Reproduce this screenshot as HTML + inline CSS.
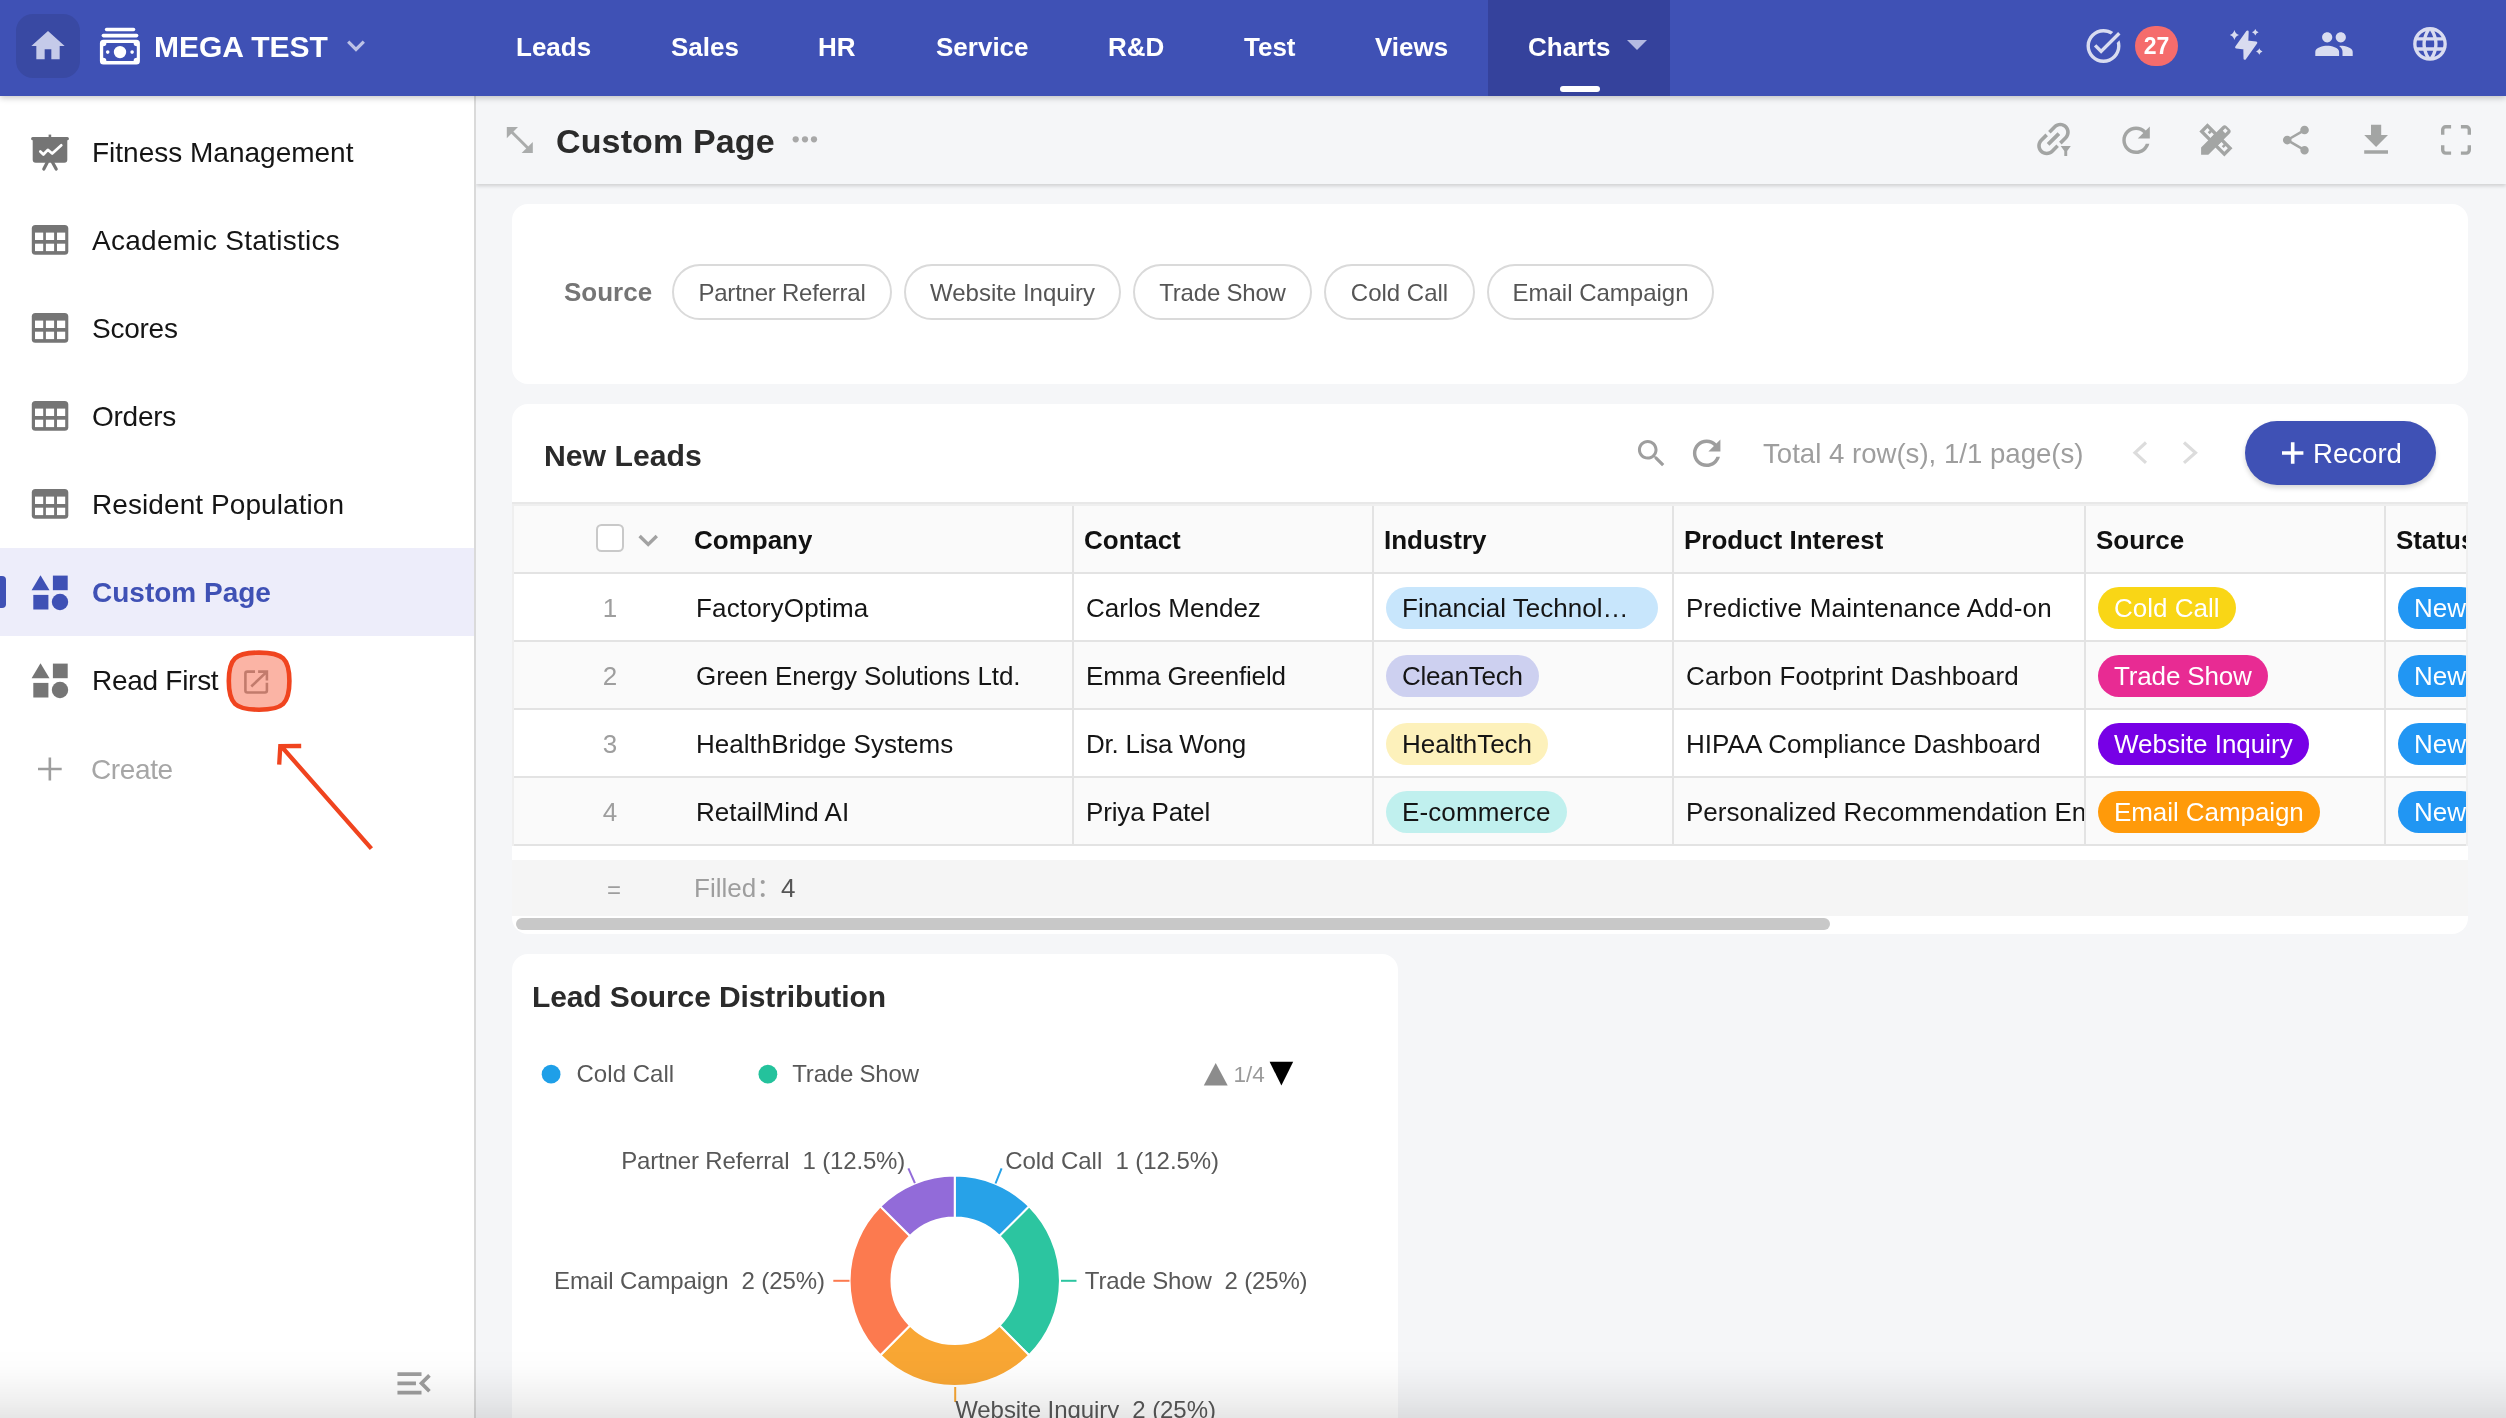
<!DOCTYPE html>
<html lang="en">
<head>
<meta charset="utf-8">
<title>Custom Page</title>
<style>
*{box-sizing:border-box;margin:0;padding:0}
html,body{width:2506px;height:1418px;overflow:hidden;background:#f5f6f8}
body{font-family:"Liberation Sans","Noto Sans CJK SC",sans-serif;color:#151515;position:relative;-webkit-font-smoothing:antialiased}
.abs{position:absolute}
body>*{will-change:transform}
svg{display:block;position:absolute;overflow:visible}
/* ---------- top nav ---------- */
#nav{position:absolute;left:0;top:0;width:2506px;height:96px;background:#3f51b5;box-shadow:0 2px 6px rgba(0,0,0,.22);z-index:5}
#home{position:absolute;left:16px;top:14px;width:64px;height:64px;border-radius:17px;background:#3949a3}
#brand{position:absolute;left:154px;top:0;height:96px;line-height:94px;font-size:30px;font-weight:700;color:#fff;letter-spacing:0px;white-space:nowrap}
.tab{position:absolute;top:0;height:96px;line-height:94px;font-size:26px;font-weight:700;color:#fff;white-space:nowrap}
#tabactive{position:absolute;left:1488px;top:0;width:182px;height:96px;background:#35429c}
#tabline{position:absolute;left:1560px;top:86px;width:40px;height:6px;border-radius:3px;background:#fff}
#badge{position:absolute;left:2135px;top:26px;width:43px;height:40px;border-radius:20px;background:#f56c6c;color:#fff;font-size:23px;font-weight:700;text-align:center;line-height:41px}
/* ---------- sidebar ---------- */
#side{position:absolute;left:0;top:96px;width:476px;height:1322px;background:#fff;border-right:2px solid #dadada}
.si{position:absolute;left:0;width:474px;height:88px;line-height:90px;font-size:28px;color:#151515;padding-left:92px;white-space:nowrap}
.si.on{background:#ededfa;color:#3f51b5;font-weight:700}
.si.on:before{content:"";position:absolute;left:0;top:28px;width:6px;height:32px;border-radius:0 4px 4px 0;background:#3f51b5}
/* ---------- content ---------- */
#titlebar{position:absolute;left:476px;top:96px;width:2030px;height:88px;background:#f5f6f8;box-shadow:0 2px 4px rgba(0,0,0,.16);z-index:2;clip-path:inset(0 0 -12px 0)}
#ptitle{position:absolute;left:556px;top:96px;height:88px;line-height:90px;font-size:34px;font-weight:700;color:#2b2b2b;z-index:3;white-space:nowrap;letter-spacing:.14px}
.card{position:absolute;background:#fff;border-radius:16px}
#fade{position:absolute;left:0;top:1348px;width:2506px;height:70px;background:linear-gradient(to bottom,rgba(0,0,0,0) 0%,rgba(0,0,0,.008) 25%,rgba(0,0,0,.03) 50%,rgba(0,0,0,.06) 75%,rgba(0,0,0,.098) 100%);z-index:20;pointer-events:none}

/* ---------- filter card ---------- */
#flabel{position:absolute;left:564px;top:264px;height:56px;line-height:56px;font-size:26px;font-weight:700;color:#757575;white-space:nowrap}
.chip{position:absolute;top:264px;height:56px;line-height:54px;border:2px solid #dadada;border-radius:28px;font-size:24px;color:#555;text-align:center;white-space:nowrap;background:#fff}
/* ---------- table card ---------- */
#tl{position:absolute;left:544px;top:424px;height:64px;line-height:64px;font-size:30.2px;font-weight:700;color:#2b2b2b;white-space:nowrap}
#total{position:absolute;left:1763px;top:421px;height:64px;line-height:65px;font-size:27.6px;color:#9e9e9e;white-space:nowrap}
#rec{position:absolute;left:2245px;top:421px;width:191px;height:64px;border-radius:32px;background:#3f51b5;box-shadow:0 3px 5px rgba(0,0,0,.16)}
#rec span{position:absolute;left:68px;top:0;line-height:65px;font-size:27.6px;color:#fff}
#thshadow{position:absolute;left:512px;top:502px;width:1956px;height:4px;background:linear-gradient(to bottom,#e8e8e8 0,#e8e8e8 50%,#efefef 50%,#efefef 100%)}
#tbord{position:absolute;left:512px;top:506px;width:1956px;height:340px;background:#efefef}
#tbl{position:absolute;left:514px;top:506px;width:1952px;height:340px;overflow:hidden;background:#fff}
.tr{position:absolute;left:0;width:1952px;height:68px;border-bottom:2px solid #e3e3e3;background:#fff}
.tr.alt,.tr.hd{background:#fafafa}
.tr.hd{height:68px}
.td{position:absolute;top:0;height:66px;line-height:69px;font-size:26px;white-space:nowrap;overflow:hidden;color:#151515}
.hd .td{font-weight:700;color:#111;line-height:69px}
.vl{position:absolute;top:0;width:2px;height:340px;background:#e3e3e3}
.no{color:#9e9e9e;width:60px;text-align:center;left:66px}
.tag{position:absolute;top:13px;height:42px;line-height:43px;border-radius:21px;font-size:26px;padding:0 16px;white-space:nowrap;overflow:hidden}
.tw{color:#fff}
#foot{position:absolute;left:512px;top:860px;width:1956px;height:56px;background:#f5f5f5;line-height:57px;font-size:26px;color:#9e9e9e}
#sbar{position:absolute;left:516px;top:918px;width:1314px;height:12px;border-radius:6px;background:#c8c8c8}
</style>
</head>
<body>
<!-- NAV -->
<div id="nav">
  <div id="home"></div>
  <div id="brand">MEGA TEST</div>
  <div id="tabactive"></div><div id="tabline"></div>
  <div class="tab" style="left:516px">Leads</div>
  <div class="tab" style="left:671px">Sales</div>
  <div class="tab" style="left:818px">HR</div>
  <div class="tab" style="left:936px">Service</div>
  <div class="tab" style="left:1108px">R&amp;D</div>
  <div class="tab" style="left:1244px">Test</div>
  <div class="tab" style="left:1375px">Views</div>
  <div class="tab" style="left:1528px">Charts</div>
  <div id="badge">27</div>
</div>
<!-- SIDEBAR -->
<div id="side">
  <div class="si" style="top:12px">Fitness Management</div>
  <div class="si" style="top:100px;letter-spacing:.28px">Academic Statistics</div>
  <div class="si" style="top:188px;letter-spacing:-.25px">Scores</div>
  <div class="si" style="top:276px;letter-spacing:-.25px">Orders</div>
  <div class="si" style="top:364px;letter-spacing:.08px">Resident Population</div>
  <div class="si on" style="top:452px">Custom Page</div>
  <div class="si" style="top:540px;letter-spacing:-0.28px">Read First</div>
  <div class="si" style="top:629px;color:#a6a6a6;padding-left:91px;letter-spacing:-.38px">Create</div>
</div>
<!-- TITLE BAR -->
<div id="titlebar"></div>
<div id="ptitle">Custom Page</div>
<!-- CARDS -->
<div class="card" id="c1" style="left:512px;top:204px;width:1956px;height:180px"></div>
<div class="card" id="c2" style="left:512px;top:404px;width:1956px;height:530px"></div>
<div class="card" id="c3" style="left:512px;top:954px;width:886px;height:464px;border-radius:16px 16px 0 0"></div>

<!-- FILTER CARD CONTENT -->
<div id="flabel">Source</div>
<div class="chip" style="left:672px;width:220px;letter-spacing:-0.23px">Partner Referral</div>
<div class="chip" style="left:904px;width:217px">Website Inquiry</div>
<div class="chip" style="left:1133px;width:179px;letter-spacing:-0.2px">Trade Show</div>
<div class="chip" style="left:1324px;width:151px">Cold Call</div>
<div class="chip" style="left:1487px;width:227px">Email Campaign</div>
<!-- TABLE CARD CONTENT -->
<div id="tl">New Leads</div>
<div id="total">Total 4 row(s), 1/1 page(s)</div>
<div id="rec"><span>Record</span></div>
<div id="thshadow"></div><div id="tbord"></div>
<div id="tbl">
  <div class="tr hd" style="top:0">
    <div class="td" style="left:180px">Company</div>
    <div class="td" style="left:570px">Contact</div>
    <div class="td" style="left:870px">Industry</div>
    <div class="td" style="left:1170px">Product Interest</div>
    <div class="td" style="left:1582px">Source</div>
    <div class="td" style="left:1882px">Status</div>
  </div>
  <div class="tr" style="top:68px">
    <div class="td no">1</div>
    <div class="td" style="letter-spacing:0.154px;left:182px">FactoryOptima</div>
    <div class="td" style="left:572px">Carlos Mendez</div>
    <div class="tag" style="left:872px;width:272px;background:#c8e6fc">Financial Technol…</div>
    <div class="td" style="letter-spacing:0.207px;left:1172px;width:398px">Predictive Maintenance Add-on</div>
    <div class="tag tw" style="left:1584px;background:#f9d616">Cold Call</div>
    <div class="tag tw" style="left:1884px;background:#2196f3">New</div>
  </div>
  <div class="tr alt" style="top:136px">
    <div class="td no">2</div>
    <div class="td" style="letter-spacing:-0.081px;left:182px">Green Energy Solutions Ltd.</div>
    <div class="td" style="letter-spacing:-0.167px;left:572px">Emma Greenfield</div>
    <div class="tag" style="letter-spacing:-0.222px;left:872px;background:#cdd0f0">CleanTech</div>
    <div class="td" style="letter-spacing:0.131px;left:1172px;width:398px">Carbon Footprint Dashboard</div>
    <div class="tag tw" style="letter-spacing:-0.150px;left:1584px;background:#e82b93">Trade Show</div>
    <div class="tag tw" style="left:1884px;background:#2196f3">New</div>
  </div>
  <div class="tr" style="top:204px">
    <div class="td no">3</div>
    <div class="td" style="left:182px">HealthBridge Systems</div>
    <div class="td" style="letter-spacing:-0.223px;left:572px">Dr. Lisa Wong</div>
    <div class="tag" style="left:872px;background:#fdf1bb">HealthTech</div>
    <div class="td" style="letter-spacing:0.046px;left:1172px;width:398px">HIPAA Compliance Dashboard</div>
    <div class="tag tw" style="left:1584px;background:#7700e6">Website Inquiry</div>
    <div class="tag tw" style="left:1884px;background:#2196f3">New</div>
  </div>
  <div class="tr alt" style="top:272px">
    <div class="td no">4</div>
    <div class="td" style="left:182px">RetailMind AI</div>
    <div class="td" style="letter-spacing:-0.155px;left:572px">Priya Patel</div>
    <div class="tag" style="letter-spacing:0.120px;left:872px;background:#c0f0ee">E-commerce</div>
    <div class="td" style="left:1172px;width:398px">Personalized Recommendation Engine</div>
    <div class="tag tw" style="letter-spacing:-0.071px;left:1584px;background:#ff9a0a">Email Campaign</div>
    <div class="tag tw" style="left:1884px;background:#2196f3">New</div>
  </div>
  <div class="vl" style="left:558px"></div>
  <div class="vl" style="left:858px"></div>
  <div class="vl" style="left:1158px"></div>
  <div class="vl" style="left:1570px"></div>
  <div class="vl" style="left:1870px"></div>
</div>
<div id="foot"><span class="abs" style="left:95px;top:1px;font-size:24px">=</span><span class="abs" style="left:182px">Filled：</span><span class="abs" style="left:269px;color:#555">4</span></div>
<div id="sbar"></div>
<svg id="ico" width="2506" height="1418" viewBox="0 0 2506 1418" style="left:0;top:0;z-index:10;pointer-events:none">
<path transform="translate(28,26) scale(1.6667)" fill="#c5cae9"  d="M10 20v-6h4v6h5v-8h3L12 3 2 12h3v8z"/>
<g fill="#fff"><rect x="104.8" y="27.7" width="30.5" height="3.6" rx="1.8"/><rect x="101.6" y="33.8" width="36.8" height="3.6" rx="1.8"/><path fill-rule="evenodd" d="M103.4 39.8h33a3.5 3.500 0 0 1 3.500 3.500v17.600a3.500 3.500 0 0 1 -3.500 3.500h-33a3.500 3.500 0 0 1 -3.500 -3.500v-17.600a3.500 3.500 0 0 1 3.500 -3.500z M106.4 43.1a3.200 3.200 0 0 1 -3.200 3.200v11.500a3.200 3.200 0 0 1 3.200 3.200h27.200a3.200 3.200 0 0 1 3.200 -3.200v-11.500a3.200 3.200 0 0 1 -3.200 -3.200z"/><circle cx="120" cy="52.1" r="6.200"/><circle cx="107.7" cy="52.1" r="1.800"/><circle cx="132.1" cy="52.1" r="1.800"/></g>
<path d="M348.2 41.6L356 49.400L363.8 41.600" fill="none" stroke="#bcc2e6" stroke-width="3.200"/>
<path d="M1627 40h20l-10 10z" fill="#b4bae2"/>
<path transform="translate(2083.1,25.6) scale(1.7000)" fill="#d9dcf0"  d="M22 5.18 10.59 16.6l-4.24-4.24 1.41-1.41 2.83 2.83 10-10L22 5.18zm-2.21 5.04c.13.57.21 1.17.21 1.78 0 4.42-3.58 8-8 8s-8-3.58-8-8 3.58-8 8-8c1.58 0 3.04.46 4.28 1.25l1.44-1.44C16.1 2.67 14.13 2 12 2 6.48 2 2 6.48 2 12s4.48 10 10 10 10-4.48 10-10c0-1.19-.22-2.33-.6-3.39l-1.61 1.61z"/>
<path fill="#d9dcf0" stroke="#d9dcf0" stroke-width="2.600" stroke-linejoin="round" d="M2247.4 31.8L2236.4 47.200L2244.600 48.200L2244.800 58.500L2256 42.800L2247 41.700z"/>
<path fill="#d9dcf0" d="M2234.4 29.9Q2235.4120000000003 33.878 2239.0 35Q2235.4120000000003 36.122 2234.4 40.1Q2233.388 36.122 2229.8 35Q2233.388 33.878 2234.4 29.9zM2255.3 29.099999999999998Q2256.0260000000003 31.595999999999997 2258.6000000000004 32.3Q2256.0260000000003 33.004 2255.3 35.5Q2254.574 33.004 2252.0 32.3Q2254.574 31.595999999999997 2255.3 29.099999999999998zM2259.3 48.2Q2260.0040000000004 50.774 2262.5 51.5Q2260.0040000000004 52.226 2259.3 54.8Q2258.596 52.226 2256.1000000000004 51.5Q2258.596 50.774 2259.3 48.2z"/>
<path transform="translate(2313.6,23.7) scale(1.7000)" fill="#d9dcf0"  d="M16 11c1.66 0 2.99-1.34 2.99-3S17.66 5 16 5c-1.66 0-3 1.34-3 3s1.34 3 3 3zm-8 0c1.66 0 2.99-1.34 2.99-3S9.66 5 8 5C6.34 5 5 6.34 5 8s1.34 3 3 3zm0 2c-2.33 0-7 1.17-7 3.5V19h14v-2.500c0-2.330-4.670-3.500-7-3.500zm8 0c-.29 0-.62.02-.97.05 1.16.84 1.97 1.97 1.97 3.45V19h6v-2.500c0-2.330-4.670-3.500-7-3.500z"/>
<path transform="translate(2409.8,23.7) scale(1.6833)" fill="#d9dcf0"  d="M11.99 2C6.47 2 2 6.48 2 12s4.47 10 9.990 10C17.52 22 22 17.52 22 12S17.52 2 11.99 2zm6.93 6h-2.950c-.32-1.250-.78-2.450-1.380-3.560 1.840.630 3.370 1.910 4.330 3.560zM12 4.040c.83 1.200 1.480 2.530 1.910 3.960h-3.820c.43-1.430 1.080-2.760 1.910-3.960zM4.260 14C4.100 13.360 4 12.690 4 12s.1-1.360.26-2h3.380c-.08.66-.14 1.320-.14 2 0 .68.06 1.340.14 2H4.260zm.82 2h2.950c.32 1.250.78 2.450 1.380 3.560-1.840-.630-3.370-1.900-4.330-3.560zm2.950-8H5.080c.96-1.660 2.490-2.930 4.330-3.560C8.810 5.550 8.350 6.750 8.030 8zM12 19.960c-.83-1.200-1.480-2.530-1.910-3.960h3.820c-.43 1.430-1.080 2.760-1.910 3.960zM14.340 14H9.660c-.09-.66-.16-1.320-.16-2 0-.68.07-1.350.16-2h4.680c.09.65.16 1.320.16 2 0 .68-.07 1.340-.16 2zm.25 5.560c.6-1.110 1.060-2.310 1.380-3.560h2.950c-.96 1.650-2.490 2.930-4.330 3.560zM16.360 14c.08-.66.14-1.320.14-2 0-.68-.06-1.340-.14-2h3.380c.16.64.26 1.310.26 2s-.1 1.360-.26 2h-3.380z"/>
<g fill="#aaacac"><path d="M506.8 127.1h11.200l-11.200 11.200z"/><path d="M532.8 153h-11.200l11.200 -11.100z"/></g><path d="M511 131.300L528.600 148.800" stroke="#aaacac" stroke-width="3" fill="none"/>
<g fill="#a8a8a8"><circle cx="795.7" cy="139.300" r="3.100"/><circle cx="805" cy="139.300" r="3.100"/><circle cx="814" cy="139.300" r="3.100"/></g>
<path transform="translate(2053.5,139) rotate(-45) scale(1.91) translate(-12,-12)" fill="#a3a5a4" d="M3.9 12c0-1.710 1.390-3.100 3.100-3.100h4V7H7c-2.760 0-5 2.240-5 5s2.240 5 5 5h4v-1.900H7c-1.710 0-3.100-1.390-3.100-3.100zM8 13h8v-2H8v2zm9-6h-4v1.900h4c1.710 0 3.100 1.390 3.100 3.100s-1.390 3.100-3.100 3.100h-4V17h4c2.760 0 5-2.240 5-5s-2.240-5-5-5z"/>
<path fill="#a3a5a4" d="M2060.7 145.900h10.100l-3.600 5v5.100h-2.900v-5.100z"/>
<path transform="translate(2115.4,119.6) scale(1.7208)" fill="#a3a5a4"  d="M17.65 6.35C16.2 4.9 14.21 4 12 4c-4.420 0-7.990 3.580-7.990 8s3.570 8 7.990 8c3.730 0 6.840-2.550 7.730-6h-2.080c-.82 2.330-3.040 4-5.650 4-3.310 0-6-2.690-6-6s2.690-6 6-6c1.660 0 3.140.69 4.220 1.780L13 11h7V4l-2.350 2.350z"/>
<g fill="#a3a5a4" fill-rule="evenodd"><path transform="translate(2207.45,123.28) rotate(45)" d="M0 0H35.400V11.470H0z M3.400 3.400V8.200H12.500V3.400H9.300V6.200H6.600V3.400z M23 3.300V8.200H32.100V3.300H29V6.100H26.300V3.300z"/><path transform="translate(2201.1,154.83) rotate(-45)" d="M0 0L5.110 -5.110H35.300a3 3 0 0 1 3 3V2.110a3 3 0 0 1 -3 3H5.110z M32.400 -1.750h3.500v3.500h-3.500z"/></g>
<path transform="translate(2278.6,122.8) scale(1.4417)" fill="#a3a5a4"  d="M18 16.080c-.76 0-1.440.3-1.960.77L8.910 12.700c.05-.23.09-.46.09-.7s-.04-.47-.09-.7l7.050-4.110c.54.5 1.250.81 2.040.81 1.660 0 3-1.340 3-3s-1.340-3-3-3-3 1.340-3 3c0 .24.04.47.09.7L8.040 9.810C7.500 9.310 6.790 9 6 9c-1.660 0-3 1.340-3 3s1.340 3 3 3c.79 0 1.500-.31 2.040-.81l7.120 4.160c-.05.21-.08.43-.08.65 0 1.610 1.310 2.920 2.920 2.920 1.610 0 2.920-1.310 2.920-2.920s-1.310-2.920-2.920-2.920z"/>
<path transform="translate(2355.7,119.7) scale(1.7000)" fill="#a3a5a4"  d="M19 9h-4V3H9v6H5l7 7 7-7zM5 18v2h14v-2H5z"/>
<g fill="none" stroke="#a3a5a4" stroke-width="3.400"><path d="M2442.700 134.700V129.700a3 3 0 0 1 3 -3H2451.100"/><path d="M2460.900 126.700H2466.300a3 3 0 0 1 3 3V134.700"/><path d="M2442.700 145.200V150.100a3 3 0 0 0 3 3H2451.100"/><path d="M2460.900 153.100H2466.300a3 3 0 0 0 3 -3V145.200"/></g>
<g fill="#757575"><rect x="31.1" y="136.900" width="37.800" height="3.300" rx="1.500"/><rect x="48.6" y="134.600" width="2.600" height="3.500"/><path d="M32.7 139.500h34.600v20.300a3 3 0 0 1 -3 3h-28.600a3 3 0 0 1 -3 -3z"/></g><path d="M47.200 162.500L43.800 169M52.600 162.500L56.200 169" stroke="#757575" stroke-width="3.200" stroke-linecap="round" fill="none"/><path d="M40.300 151.500L43.400 154.500L47.800 149.800L52.200 153.500L61.300 145.300" stroke="#fff" stroke-width="2.700" fill="none" stroke-linecap="round" stroke-linejoin="round"/>
<rect x="31.8" y="225" width="36.500" height="29.800" rx="3.600" fill="#757575"/><rect x="35" y="232.6" width="8.200" height="7.400" fill="#fff"/><rect x="35" y="243.7" width="8.200" height="7.400" fill="#fff"/><rect x="45.9" y="232.6" width="8.200" height="7.400" fill="#fff"/><rect x="45.9" y="243.7" width="8.200" height="7.400" fill="#fff"/><rect x="57" y="232.6" width="8.200" height="7.400" fill="#fff"/><rect x="57" y="243.7" width="8.200" height="7.400" fill="#fff"/>
<rect x="31.8" y="313" width="36.500" height="29.800" rx="3.600" fill="#757575"/><rect x="35" y="320.6" width="8.200" height="7.400" fill="#fff"/><rect x="35" y="331.7" width="8.200" height="7.400" fill="#fff"/><rect x="45.9" y="320.6" width="8.200" height="7.400" fill="#fff"/><rect x="45.9" y="331.7" width="8.200" height="7.400" fill="#fff"/><rect x="57" y="320.6" width="8.200" height="7.400" fill="#fff"/><rect x="57" y="331.7" width="8.200" height="7.400" fill="#fff"/>
<rect x="31.8" y="401" width="36.500" height="29.800" rx="3.600" fill="#757575"/><rect x="35" y="408.6" width="8.200" height="7.400" fill="#fff"/><rect x="35" y="419.7" width="8.200" height="7.400" fill="#fff"/><rect x="45.9" y="408.6" width="8.200" height="7.400" fill="#fff"/><rect x="45.9" y="419.7" width="8.200" height="7.400" fill="#fff"/><rect x="57" y="408.6" width="8.200" height="7.400" fill="#fff"/><rect x="57" y="419.7" width="8.200" height="7.400" fill="#fff"/>
<rect x="31.8" y="489" width="36.500" height="29.800" rx="3.600" fill="#757575"/><rect x="35" y="496.6" width="8.200" height="7.400" fill="#fff"/><rect x="35" y="507.7" width="8.200" height="7.400" fill="#fff"/><rect x="45.9" y="496.6" width="8.200" height="7.400" fill="#fff"/><rect x="45.9" y="507.7" width="8.200" height="7.400" fill="#fff"/><rect x="57" y="496.6" width="8.200" height="7.400" fill="#fff"/><rect x="57" y="507.7" width="8.200" height="7.400" fill="#fff"/>
<g fill="#3f51b5"><path d="M40.5 575.3L49.500 590.2H31.600z"/><rect x="52.9" y="575.6" width="14.800" height="14.600"/><rect x="33.3" y="594.9" width="15.100" height="14.600"/><circle cx="60" cy="602" r="8.200"/></g>
<g fill="#757575"><path d="M40.5 663.3L49.500 678.2H31.600z"/><rect x="52.9" y="663.6" width="14.800" height="14.600"/><rect x="33.3" y="682.9" width="15.100" height="14.600"/><circle cx="60" cy="690" r="8.200"/></g>
<g fill="none" stroke="#a0a0a0" stroke-width="2.600"><path d="M255 671.600H247.400a2 2 0 0 0 -2 2V690.500a2 2 0 0 0 2 2H264.900a2 2 0 0 0 2 -2V682.700"/><path d="M258.100 671.600H266.900V680.600M266.900 671.600L251.300 686.500"/></g>
<path d="M259.100 652.600C283 652.600 289.400 658.600 289.400 681.100C289.400 703.700 283 709.700 259.100 709.700C235.200 709.700 228.800 703.700 228.800 681.100C228.800 658.600 235.200 652.600 259.100 652.600z" fill="rgba(244,67,30,.4)" stroke="#f0441f" stroke-width="4.600"/>
<path d="M371.400 848.700L280.600 745.500M301.200 746L280.300 746.200L279.200 764.600" fill="none" stroke="#f0441f" stroke-width="4.300"/>
<path d="M38 769H61.700M49.850 757.500V780.500" stroke="#9e9e9e" stroke-width="2.600" fill="none"/>
<path transform="translate(391.9,1361.1) scale(1.8500)" fill="#9e9e9e"  d="M3 18h13v-2H3v2zm0-5h10v-2H3v2zm0-7v2h13V6H3zm18 9.590L17.420 12 21 8.410 19.590 7l-5 5 5 5L21 15.590z"/>
<path transform="translate(1633.4,435.4) scale(1.5083)" fill="#9e9e9e"  d="M15.5 14h-.79l-.28-.27C15.41 12.590 16 11.110 16 9.500 16 5.910 13.090 3 9.500 3S3 5.910 3 9.500 5.910 16 9.500 16c1.610 0 3.090-.59 4.230-1.570l.27.28v.79l5 4.990L20.490 19l-4.990-5zm-6 0C7.010 14 5 11.990 5 9.500S7.010 5 9.500 5 14 7.010 14 9.500 11.990 14 9.500 14z"/>
<path transform="translate(1686,432.6) scale(1.7208)" fill="#9e9e9e"  d="M17.65 6.35C16.2 4.9 14.21 4 12 4c-4.420 0-7.990 3.580-7.990 8s3.570 8 7.990 8c3.730 0 6.840-2.550 7.730-6h-2.080c-.82 2.330-3.040 4-5.650 4-3.310 0-6-2.690-6-6s2.690-6 6-6c1.660 0 3.140.69 4.220 1.780L13 11h7V4l-2.350 2.350z"/>
<path d="M2146 442.500L2135 452.700L2146 462.900" stroke="#dcdcdc" stroke-width="3.200" fill="none"/><path d="M2184 442.500L2195.500 452.700L2184 462.900" stroke="#dcdcdc" stroke-width="3.200" fill="none"/>
<path d="M2282 453H2303.400M2292.700 442.300V463.700" stroke="#fff" stroke-width="3.600" fill="none"/>
<rect x="597" y="525" width="26" height="26" rx="4.500" fill="#fff" stroke="#c9c9c9" stroke-width="2"/>
<path d="M639.600 536L648.200 544.400L656.800 536" stroke="#a2a2a2" stroke-width="3.400" fill="none"/>
</svg>
<svg id="chart" width="886" height="464" viewBox="512 954 886 464" style="left:512px;top:954px;z-index:9;overflow:hidden" font-family="Liberation Sans, sans-serif">
<text x="532" y="1007" font-size="30" font-weight="700" fill="#2b2b2b" textLength="354" lengthAdjust="spacing">Lead Source Distribution</text>
<path d="M954.75 1175.60A105.2 105.2 0 0 1 1029.14 1206.41L999.51 1236.04A63.3 63.3 0 0 0 954.75 1217.50z" fill="#27a2e8" stroke="#fff" stroke-width="2" stroke-linejoin="round"/>
<path d="M1029.14 1206.41A105.2 105.2 0 0 1 1029.14 1355.19L999.51 1325.56A63.3 63.3 0 0 0 999.51 1236.04z" fill="#2cc5a0" stroke="#fff" stroke-width="2" stroke-linejoin="round"/>
<path d="M1029.14 1355.19A105.2 105.2 0 0 1 880.36 1355.19L909.99 1325.56A63.3 63.3 0 0 0 999.51 1325.56z" fill="#f9a734" stroke="#fff" stroke-width="2" stroke-linejoin="round"/>
<path d="M880.36 1355.19A105.2 105.2 0 0 1 880.36 1206.41L909.99 1236.04A63.3 63.3 0 0 0 909.99 1325.56z" fill="#fc7a4f" stroke="#fff" stroke-width="2" stroke-linejoin="round"/>
<path d="M880.36 1206.41A105.2 105.2 0 0 1 954.75 1175.60L954.75 1217.50A63.3 63.3 0 0 0 909.99 1236.04z" fill="#926bd9" stroke="#fff" stroke-width="2" stroke-linejoin="round"/>
<circle cx="551.1" cy="1074.200" r="9.400" fill="#1e9fe8"/><circle cx="767.9" cy="1074.200" r="9.400" fill="#24c29c"/>
<text x="576.5" y="1082.300" font-size="24" fill="#585858" lengthAdjust="spacing" textLength="97.700">Cold Call</text><text x="792.3" y="1082.300" font-size="24" fill="#585858" lengthAdjust="spacing" textLength="126.700">Trade Show</text>
<path d="M1215.700 1063L1227.700 1085.600H1203.800z" fill="#8c8c8c"/><path d="M1269.600 1061.700H1293.200L1281.400 1085.600z" fill="#000"/>
<text x="1233.600" y="1082.300" font-size="22.500" fill="#9a9a9a">1/4</text>
<g fill="none" stroke-width="2"><path d="M995.500 1183.500L1001.600 1168.300" stroke="#27a2e8"/><path d="M914.900 1183.200L908.400 1168.300" stroke="#926bd9"/><path d="M1061 1280.800H1076.500" stroke="#2cc5a0"/><path d="M833.300 1280.800H849.500" stroke="#fc7a4f"/><path d="M955.200 1387V1402" stroke="#f9a734"/></g>
<text x="1005.200" y="1169.300" font-size="24" fill="#585858" lengthAdjust="spacing" textLength="213.900" xml:space="preserve">Cold Call  1 (12.5%)</text>
<text x="621.200" y="1169.300" font-size="24" fill="#585858" lengthAdjust="spacing" textLength="284.100" xml:space="preserve">Partner Referral  1 (12.5%)</text>
<text x="1084.800" y="1289.300" font-size="24" fill="#585858" lengthAdjust="spacing" textLength="222.800" xml:space="preserve">Trade Show  2 (25%)</text>
<text x="554" y="1289.300" font-size="24" fill="#585858" lengthAdjust="spacing" textLength="270.900" xml:space="preserve">Email Campaign  2 (25%)</text>
<text x="955.200" y="1418" font-size="24" fill="#585858" lengthAdjust="spacing" textLength="260.700" xml:space="preserve">Website Inquiry  2 (25%)</text>
</svg>
<div id="fade"></div>
</body>
</html>
